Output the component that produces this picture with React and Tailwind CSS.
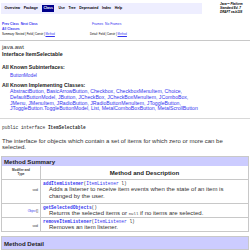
const navItems = ["Overview", "Package", "Class", "Use", "Tree", "Deprecated", "Index", "Help"];

const implementing = [
  "AbstractButton, BasicArrowButton, Checkbox, CheckboxMenuItem, Choice,",
  "DefaultButtonModel, JButton, JCheckBox, JCheckBoxMenuItem, JComboBox,",
  "JMenu, JMenuItem, JRadioButton, JRadioButtonMenuItem, JToggleButton,",
  "JToggleButton.ToggleButtonModel, List, MetalComboBoxButton, MetalScrollButton",
];

const link = "text-[#3434f0]";
const mono = "font-['Liberation_Mono',monospace]";

export default function App() {
  return (
    <div className="w-[250px] h-[250px] overflow-hidden bg-white text-[#333] font-['Liberation_Sans',Arial,sans-serif]">
      {/* top navigation */}
      <div className="h-[3px]" />
      <div className="flex h-[12px]">
        <div className="ml-[1px] w-[201px] h-[11px] bg-[#eeeeff] flex items-center pl-[3px] gap-[2.6px] text-[3.5px] font-bold text-black">
          {navItems.map((n) =>
            n === "Class" ? (
              <span key={n} className="bg-[#00008b] text-white px-[1.5px] py-[1px] mx-[1px]">
                {n}
              </span>
            ) : (
              <span key={n} className="px-[0.5px]">{n}</span>
            )
          )}
        </div>
        <div className="ml-[18px] -mt-[1px] italic font-bold text-[3px] leading-[4px] text-black">
          Java™ Platform
          <br />
          Standard Ed. 7
          <br />
          DRAFT ea-b138
        </div>
      </div>

      {/* sub navigation */}
      <div className="h-[7px]" />
      <div className="flex h-[5px] items-center text-[3.3px] font-bold pl-[2px]">
        <span className={`${link} w-[90px]`}>Prev Class&nbsp; Next Class</span>
        <span className={`${link} font-normal`}>Frames&nbsp; No Frames</span>
      </div>
      <div className={`h-[4px] flex items-center pl-[2px] text-[3.3px] font-bold ${link}`}>All Classes</div>
      <div className="flex h-[6px] items-center text-[2.8px] pl-[2px] text-black">
        <span className="w-[88px]">
          Summary: Nested | Field | Constr | <span className={`${link} underline`}>Method</span>
        </span>
        <span>
          Detail: Field | Constr | <span className={`${link} underline`}>Method</span>
        </span>
      </div>
      <div className="h-[3px]" />
      <div className="h-[1px] bg-[#c8c8c8]" />

      {/* header */}
      <div className="h-[3px]" />
      <div className="h-[6px] flex items-center pl-[2px] text-[6px] text-[#333]">java.awt</div>
      <div className="h-[2px]" />
      <div className="h-[6px] flex items-center pl-[2px] text-[5.3px] font-bold text-[#222]">Interface ItemSelectable</div>

      {/* known subinterfaces / classes */}
      <div className="h-[7px]" />
      <div className="h-[6px] flex items-center pl-[2px] text-[5.2px] font-bold text-[#222]">All Known Subinterfaces:</div>
      <div className="h-[2px]" />
      <div className={`h-[6px] flex items-center pl-[10px] text-[4.8px] ${link}`}>ButtonModel</div>
      <div className="h-[4px]" />
      <div className="h-[6px] flex items-center pl-[2px] text-[5.2px] font-bold text-[#222]">All Known Implementing Classes:</div>
      <div className={`pl-[10px] text-[5.15px] leading-[5.8px] whitespace-nowrap ${link}`}>
        {implementing.map((l) => (
          <div key={l}>{l}</div>
        ))}
      </div>
      <div className="h-[12px] flex items-center">
        <div className="w-full h-[1px] bg-[#d8d8d8]" />
      </div>

      {/* declaration + description */}
      <div className={`h-[8px] flex items-center pl-[2px] text-[4.5px] ${mono} text-[#333]`}>
        public interface&nbsp;<span className="font-bold">ItemSelectable</span>
      </div>
      <div className="h-[6px]" />
      <div className="pl-[2px] pr-[8px] text-[6px] leading-[6px] text-[#333]">
        The interface for objects which contain a set of items for which zero or more can be selected.
      </div>

      {/* method summary */}
      <div className="h-[6px]" />
      <div className="mx-[1px] border border-[#c8c8c8]">
        <div className="h-[9px] bg-[#ccccff] flex items-center pl-[2px] text-[6.1px] font-bold text-[#222]">Method Summary</div>
        <div className="grid grid-cols-[39px_1fr] text-[#333]">
          <div className="h-[14px] border-r border-b border-[#c8c8c8] flex items-center justify-center text-center text-[3px] leading-[3.5px] font-bold">
            Modifier and
            <br />
            Type
          </div>
          <div className="h-[14px] border-b border-[#c8c8c8] flex items-center justify-center text-[6.1px] font-bold text-[#222]">
            Method and Description
          </div>

          <div className="h-[24px] border-r border-b border-[#c8c8c8] flex items-start justify-end pt-[8px] pr-[2px] text-[3px]">
            void
          </div>
          <div className="h-[24px] border-b border-[#c8c8c8] pl-[2px] pr-[8px] pt-[1px]">
            <div className={`text-[4.5px] leading-[5px] ${mono}`}>
              <span className={`${link} font-bold`}>addItemListener</span>(<span className={link}>ItemListener</span>&nbsp;l)
            </div>
            <div className="pl-[6px] text-[6px] leading-[7px]">
              Adds a listener to receive item events when the state of an item is changed by the user.
            </div>
          </div>

          <div className="h-[14px] border-r border-b border-[#c8c8c8] flex items-start justify-end pt-[5px] pr-[2px] text-[3px]">
            <span className={link}>Object</span>[]
          </div>
          <div className="h-[14px] border-b border-[#c8c8c8] pl-[2px] pt-[1px]">
            <div className={`text-[4.5px] leading-[5px] ${mono}`}>
              <span className={`${link} font-bold`}>getSelectedObjects</span>()
            </div>
            <div className="pl-[6px] text-[6px] leading-[7px] whitespace-nowrap">
              Returns the selected items or <span className={`${mono} text-[4px]`}>null</span> if no items are selected.
            </div>
          </div>

          <div className="h-[13px] border-r border-[#c8c8c8] flex items-start justify-end pt-[6px] pr-[2px] text-[3px]">
            void
          </div>
          <div className="h-[13px] pl-[2px] pt-[1px]">
            <div className={`text-[4.5px] leading-[5px] ${mono}`}>
              <span className={`${link} font-bold`}>removeItemListener</span>(<span className={link}>ItemListener</span>&nbsp;l)
            </div>
            <div className="pl-[6px] text-[6px] leading-[7px]">Removes an item listener.</div>
          </div>
        </div>
      </div>

      {/* method detail */}
      <div className="h-[4px]" />
      <div className="mx-[1px] border border-[#c8c8c8] h-[14px] bg-[#ccccff] flex items-start pt-[2px] pl-[2px] text-[6.1px] font-bold text-[#222]">
        Method Detail
      </div>
    </div>
  );
}
